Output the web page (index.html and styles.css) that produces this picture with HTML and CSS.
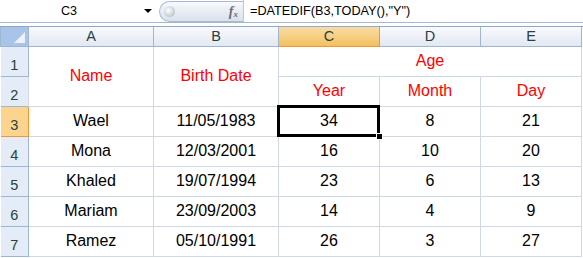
FILE: index.html
```html
<!DOCTYPE html>
<html lang="en">
<head>
  <meta charset="UTF-8">
  <title>DATEDIF - Age</title>
  <link rel="stylesheet" href="styles.css">
</head>
<body>

  <div class="formula-bar">
    <div class="name-box">
      <span class="cell-ref">C3</span>
      <span class="drop-arrow"></span>
    </div>
    <div class="fx-pill">
      <span class="knob"></span>
      <span class="fx">f<sub>x</sub></span>
    </div>
    <div class="formula">=DATEDIF(B3,TODAY(),"Y")</div>
  </div>
  <div class="bar-gap"></div>

  <table class="sheet">
    <colgroup>
      <col class="col-rh">
      <col class="col-a">
      <col class="col-b">
      <col class="col-c">
      <col class="col-d">
      <col class="col-e">
    </colgroup>
    <tr class="col-heads">
      <th class="corner"><span class="corner-tri"></span></th>
      <th>A</th>
      <th>B</th>
      <th class="sel">C</th>
      <th>D</th>
      <th>E</th>
    </tr>
    <tr>
      <th class="rh">1</th>
      <td class="red" rowspan="2">Name</td>
      <td class="red" rowspan="2">Birth Date</td>
      <td class="red" colspan="3">Age</td>
    </tr>
    <tr>
      <th class="rh">2</th>
      <td class="red">Year</td>
      <td class="red">Month</td>
      <td class="red">Day</td>
    </tr>
    <tr>
      <th class="rh sel">3</th>
      <td>Wael</td>
      <td>11/05/1983</td>
      <td class="active">34<span class="fill-handle"></span></td>
      <td>8</td>
      <td>21</td>
    </tr>
    <tr>
      <th class="rh">4</th>
      <td>Mona</td>
      <td>12/03/2001</td>
      <td>16</td>
      <td>10</td>
      <td>20</td>
    </tr>
    <tr>
      <th class="rh">5</th>
      <td>Khaled</td>
      <td>19/07/1994</td>
      <td>23</td>
      <td>6</td>
      <td>13</td>
    </tr>
    <tr>
      <th class="rh">6</th>
      <td>Mariam</td>
      <td>23/09/2003</td>
      <td>14</td>
      <td>4</td>
      <td>9</td>
    </tr>
    <tr>
      <th class="rh">7</th>
      <td>Ramez</td>
      <td>05/10/1991</td>
      <td>26</td>
      <td>3</td>
      <td>27</td>
    </tr>
  </table>

</body>
</html>
```

FILE: styles.css
```css
body {
  margin: 0;
  padding: 0;
  width: 583px;
  height: 258px;
  overflow: hidden;
  background: #fff;
  font-family: "Liberation Sans", Arial, sans-serif;
  color: #000;
}

/* formula bar */
.formula-bar {
  display: flex;
  height: 22px;
  border-bottom: 1px solid #a3b8d3;
  background: #fff;
}

.name-box {
  width: 159px;
  display: flex;
  align-items: center;
  font-size: 12.5px;
}

.cell-ref {
  flex: 1;
  text-align: center;
}

.drop-arrow {
  width: 0;
  height: 0;
  border-left: 4px solid transparent;
  border-right: 4px solid transparent;
  border-top: 4px solid #000;
  margin: 0 7px 0 6px;
}

.fx-pill {
  width: 84px;
  margin-top: 1px;
  border: 1px solid #a9bbd2;
  border-right: none;
  border-radius: 11px 0 0 11px;
  background: linear-gradient(to bottom, #f7f9fc, #d9e1ec);
  display: flex;
  align-items: center;
  justify-content: space-between;
  padding: 0 5px 0 4px;
  box-sizing: border-box;
}

.knob {
  width: 11px;
  height: 11px;
  border-radius: 50%;
  background: radial-gradient(circle at 40% 40%, #fff, #aab1ba);
}

.fx {
  font-family: "Liberation Serif", serif;
  font-style: italic;
  font-weight: bold;
  font-size: 14px;
  color: #6f6f6f;
  line-height: 1;
}

.fx sub {
  font-size: 9px;
  vertical-align: -1px;
}

.formula {
  flex: 1;
  border-left: 1px solid #b7c6da;
  font-size: 12.7px;
  line-height: 22px;
  padding-left: 6px;
}

.bar-gap {
  height: 3px;
  border-bottom: 1px solid #8fa8c8;
  background: #fff;
}

/* worksheet grid */
.sheet {
  border-collapse: collapse;
  table-layout: fixed;
  width: 582px;
}

.col-rh { width: 28px; }
.col-a { width: 125px; }
.col-b { width: 125px; }
.col-c { width: 101px; }
.col-d { width: 101px; }
.col-e { width: 101px; }

.sheet tr {
  height: 30px;
}

.sheet tr.col-heads {
  height: 19px;
}

.col-heads th {
  height: 18px;
  padding: 0;
  font-weight: normal;
  font-size: 14.5px;
  line-height: 16px;
  color: #27413e;
  background: linear-gradient(to bottom, #f8f9fc, #e2e8f1);
  border: 1px solid #9eb6ce;
  border-top: none;
  text-align: center;
}

.col-heads th.sel {
  background: linear-gradient(to bottom, #f9dca6, #f1c15e);
  border: 1px solid #f29536;
  border-top: none;
}

.col-heads th.corner {
  background: #a9c4e9;
  position: relative;
}

.corner-tri {
  position: absolute;
  right: 3px;
  bottom: 3px;
  width: 0;
  height: 0;
  border-left: 11px solid transparent;
  border-bottom: 11px solid #eef2f8;
}

.rh {
  height: 26px;
  padding: 0 0 3px;
  font-weight: normal;
  font-size: 14.5px;
  line-height: 16px;
  color: #27413e;
  background: #e4ecf7;
  border: 1px solid #9eb6ce;
  border-left: none;
  vertical-align: bottom;
  text-align: center;
}

.rh.sel {
  background: #fdd48e;
  border: 1px solid #f29536;
  border-left: none;
}

.sheet td {
  height: 29px;
  padding: 0;
  border: 1px solid #d0d7e5;
  font-size: 16px;
  line-height: 18px;
  text-align: center;
  vertical-align: middle;
}

.sheet td.red {
  color: #ff0000;
}

.sheet td.active {
  position: relative;
}

.sheet td.active::after {
  content: "";
  position: absolute;
  left: -2px;
  top: -2px;
  right: -1px;
  bottom: -1px;
  border: 3px solid #000;
}

.fill-handle {
  position: absolute;
  right: -4px;
  bottom: -4px;
  width: 5px;
  height: 5px;
  background: #000;
  border: 1px solid #fff;
  z-index: 1;
}
```
